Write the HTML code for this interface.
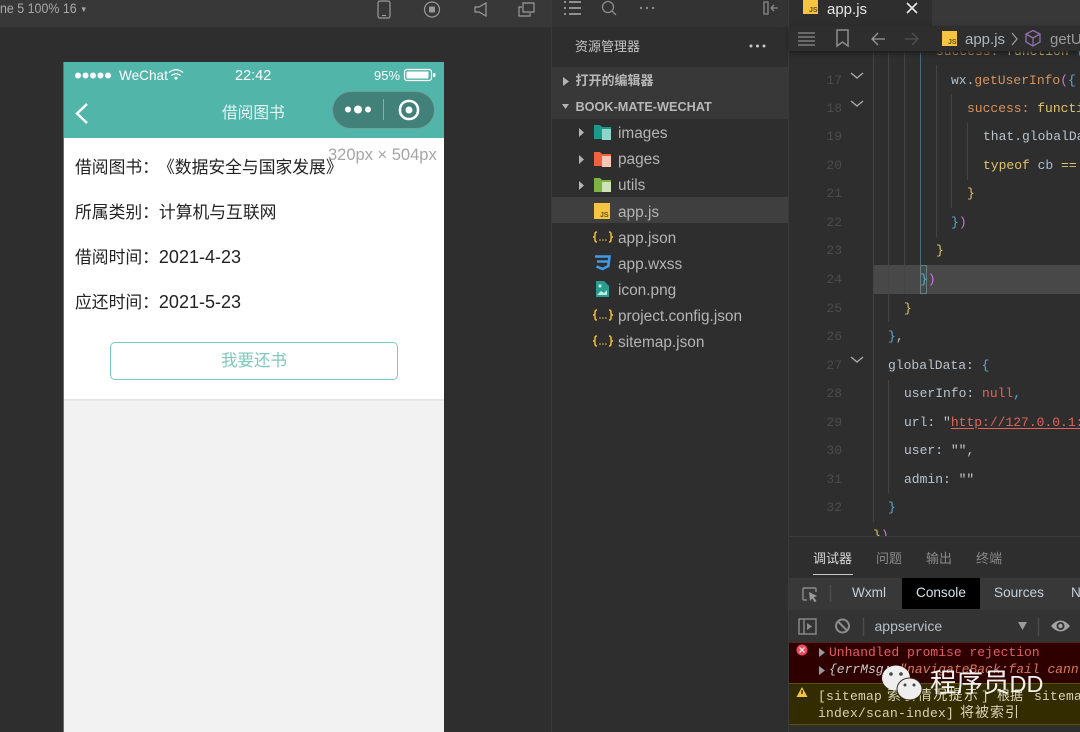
<!DOCTYPE html>
<html><head><meta charset="utf-8">
<style>
*{box-sizing:border-box}
html,body{margin:0;padding:0;width:1080px;height:732px;overflow:hidden;background:#2e2e2e}
body{position:relative;font-family:"Liberation Sans","Noto Sans CJK SC",sans-serif}
.a{position:absolute;white-space:nowrap}
.r{position:absolute}
.code{position:absolute;font:13px/20px "Liberation Mono","Noto Sans CJK SC",monospace;white-space:pre;color:#a9b7c6}
.ln{position:absolute;left:790px;width:52px;text-align:right;font:13px/20px "Liberation Mono",monospace;color:#4c4c4c}
.g{position:absolute;width:1px;background:#444}
.tree{position:absolute;left:618px;font-size:15.4px;line-height:20px;color:#b4b4b4;white-space:nowrap}
.li{position:absolute;left:75px;font-size:16.8px;line-height:24px;color:#222;white-space:nowrap;font-family:"Liberation Sans","Noto Sans CJK SC",sans-serif}
.li b{font-weight:normal;font-size:18px}
.o{color:#d9935c}.y{color:#e0c46c}.w{color:#a9c0d0}.b{color:#5aa9d6}.t{color:#b9c4cc}.rd{color:#e0645a}.s{color:#c8c8c8}
svg{position:absolute;overflow:visible}
.js{font:bold 7px "Liberation Sans",sans-serif;fill:#6a5010}
.tab{font-size:13.6px;line-height:18px;color:#c4d0da}
</style></head><body>

<!-- top toolbar left -->
<div class="r" style="left:0;top:0;width:551px;height:27px;background:#383838"></div>
<div class="a" style="left:0;top:0;line-height:18px;font-size:13.500px;color:#a8a8a8;height:18px;transform:scaleX(.92);transform-origin:0 0">ne 5 100% 16 <span style="font-size:8px;vertical-align:1px">▼</span></div>
<svg style="left:0;top:0" width="551" height="27" fill="none" stroke="#9a9a9a" stroke-width="1.2">
<rect x="378" y="1" width="12" height="17" rx="2"/><line x1="382" y1="15.5" x2="386" y2="15.5"/>
<circle cx="432" cy="9.5" r="7.5"/><rect x="429" y="6.5" width="6" height="6" fill="#9a9a9a" stroke="none" rx="1"/>
<path d="M485 3v13l-7-4h-4V7h4z" transform="translate(1 0)"/>
<path d="M522 7h-3v9h11v-3M523 3h11v9h-11z"/>
</svg>

<!-- phone -->
<div class="r" style="left:63px;top:62px;width:1px;height:670px;background:#6a6a6a"></div>
<div class="r" style="left:64px;top:62px;width:380px;height:76px;background:#52b5aa"></div>
<div class="r" style="left:64px;top:138px;width:380px;height:261px;background:#fff"></div>
<div class="r" style="left:64px;top:399px;width:380px;height:333px;background:#f2f2f2;border-top:2px solid #e6e6e6"></div>

<svg style="left:64px;top:62px" width="380" height="76">
<g fill="#fff"><circle cx="14" cy="13.500" r="3"/><circle cx="21.500" cy="13.500" r="3"/><circle cx="29" cy="13.500" r="3"/><circle cx="36.500" cy="13.500" r="3"/><circle cx="44" cy="13.500" r="3"/></g>
<g fill="none" stroke="#fff" stroke-width="1.300"><path d="M105 10.500q7-5.500 14 0M107.500 13.500q4.500-3.500 9 0"/></g><path d="M110 16l2-1.800 2 1.800-2 2z" fill="#fff"/>
<path d="M23 42l-10 9.500 10 9.500" fill="none" stroke="#fff" stroke-width="2.400"/>
<rect x="340.500" y="7.500" width="27" height="11" rx="2.500" fill="none" stroke="#fff" stroke-width="1.200"/>
<rect x="342.500" y="9.500" width="22" height="7" rx="1" fill="#fff"/>
<path d="M369 11h1.500q1 0 1 1v2q0 1-1 1H369z" fill="#fff"/>
<rect x="268.500" y="29.500" width="102" height="37" rx="18.500" fill="#41817a" stroke="#6aa49e"/>
<g fill="#fff"><circle cx="284" cy="47.500" r="3"/><circle cx="294" cy="47.500" r="4"/><circle cx="304" cy="47.500" r="3"/></g>
<line x1="319.500" y1="37" x2="319.500" y2="58" stroke="#7fb0aa"/>
<rect x="336" y="39" width="18" height="18" rx="8.500" fill="none" stroke="#fff" stroke-width="2.600"/><circle cx="345" cy="48" r="3.500" fill="#fff"/>
</svg>
<div class="a" style="left:119px;top:67px;font-size:13.600px;line-height:18px;color:#fff">WeChat</div>
<div class="a" style="left:235px;top:67px;font-size:14.500px;line-height:18px;color:#fff">22:42</div>
<div class="a" style="left:374px;top:67px;font-size:13px;line-height:18px;color:#fff">95%</div>
<div class="a" style="left:222px;top:103px;font-size:15.700px;line-height:22px;color:#e6f5f3">借阅图书</div>

<div class="li" style="top:156px">借阅图书：</div>
<div class="li" style="top:156px;left:158px">《数据安全与国家发展》</div>
<div class="li" style="top:201px">所属类别：计算机与互联网</div>
<div class="li" style="top:245px">借阅时间：<b>2021-4-23</b></div>
<div class="li" style="top:290px">应还时间：<b>2021-5-23</b></div>
<div class="a" style="left:328px;top:145px;font-size:16.500px;line-height:20px;color:#a5a5a5">320px × 504px</div>
<div class="r" style="left:110px;top:342px;width:288px;height:38px;border:1px solid #74cbbf;border-radius:5px;background:#fff;text-align:center;font-size:16.500px;line-height:37px;color:#7fc8bd">我要还书</div>

<!-- explorer -->
<div class="r" style="left:551px;top:0;width:1px;height:732px;background:#3a3a3a"></div>
<div class="r" style="left:552px;top:0;width:237px;height:27px;background:#333"></div>
<div class="r" style="left:552px;top:67px;width:237px;height:52px;background:#383838"></div>
<div class="r" style="left:552px;top:197px;width:237px;height:26px;background:#3f3f3f"></div>
<div class="r" style="left:788px;top:0;width:1px;height:732px;background:#3a3a3a"></div>
<svg style="left:552px;top:0" width="237" height="30" fill="none" stroke="#b0b0b0" stroke-width="1.600">
<path d="M17 2h12M17 8h12M17 14h12M12 2h2M12 8h2M12 14h2"/>
<circle cx="56" cy="7" r="5.500" stroke="#8a8a8a" stroke-width="1.300"/><path d="M60 11l4 4" stroke="#8a8a8a" stroke-width="1.300"/>
<g fill="#8a8a8a" stroke="none"><circle cx="89" cy="8" r="1.200"/><circle cx="95" cy="8" r="1.200"/><circle cx="101" cy="8" r="1.200"/></g>
<path d="M212 2h4v12h-4zM226 8h-7M222 5l-3 3 3 3" stroke="#8a8a8a" stroke-width="1.300"/>
</svg>
<div class="a" style="left:575px;top:37px;font-size:13px;line-height:20px;color:#c4c4c4">资源管理器</div>
<svg style="left:552px;top:40px" width="237" height="12" fill="#c8c8c8"><circle cx="199" cy="6" r="1.500"/><circle cx="205.500" cy="6" r="1.500"/><circle cx="212" cy="6" r="1.500"/></svg>
<div class="a" style="left:575.500px;top:71px;font-size:13px;line-height:20px;color:#b8b8b8;font-weight:bold">打开的编辑器</div>
<div class="a" style="left:575.500px;top:97px;font-size:12.700px;line-height:20px;color:#b8b8b8;font-weight:bold">BOOK-MATE-WECHAT</div>
<svg style="left:552px;top:60px" width="60" height="135" fill="#b4b4b4">
<path d="M11 17l6 4.500-6 4.500z"/><path d="M8 44h7l-3.500 5z" transform="translate(2 0)"/>
<path d="M27 68l5 4.500-5 4.500zM27 95l5 4.500-5 4.500zM27 121l5 4.500-5 4.500z"/>
</svg>
<svg style="left:594px;top:124px" width="20" height="230">
<path d="M0 1h6l2 2h9v12H0z" fill="#1a9a8c"/><rect x="8" y="5" width="9" height="11" fill="#8fd6c8"/>
<path d="M0 28h6l2 2h9v12H0z" fill="#f0623f"/><rect x="8" y="32" width="9" height="11" fill="#f7c6b4"/>
<path d="M0 54h6l2 2h9v12H0z" fill="#7cb342"/><rect x="8" y="58" width="9" height="10" fill="#cfe3b8"/>
<rect x="0" y="79" width="16" height="16" fill="#f5c542"/><text class="js" x="6" y="93">JS</text>
<g fill="none" stroke="#e8b43a" stroke-width="1.600" transform="translate(0 4)"><path d="M3 104q-2 0-2 2v1.500q0 1.500-2 1.500 2 0 2 1.500v1.500q0 2 2 2M15 104q2 0 2 2v1.500q0 1.500 2 1.500-2 0-2 1.500v1.500q0 2-2 2"/><g fill="#e8b43a" stroke="none"><circle cx="6" cy="112" r=".8"/><circle cx="9" cy="112" r=".8"/><circle cx="12" cy="112" r=".8"/></g></g>
<path d="M1 132.500h14.500l-1.200 9.500-5.800 3-6-2.500M3 137.500h11" fill="none" stroke="#3d9be9" stroke-width="2.600"/>
<path d="M2 157h8l5 5v11H2z" fill="#2a9d8f"/><circle cx="6" cy="162" r="1.500" fill="#cfe"/><path d="M3 171l4-4 3 2 3-3v5z" fill="#bfe9e0"/>
<g fill="none" stroke="#e8b43a" stroke-width="1.600" transform="translate(0 82)"><path d="M3 104q-2 0-2 2v1.500q0 1.500-2 1.500 2 0 2 1.500v1.500q0 2 2 2M15 104q2 0 2 2v1.500q0 1.500 2 1.500-2 0-2 1.500v1.500q0 2-2 2"/><g fill="#e8b43a" stroke="none"><circle cx="6" cy="112" r=".8"/><circle cx="9" cy="112" r=".8"/><circle cx="12" cy="112" r=".8"/></g></g>
<g fill="none" stroke="#e8b43a" stroke-width="1.600" transform="translate(0 108)"><path d="M3 104q-2 0-2 2v1.500q0 1.500-2 1.500 2 0 2 1.500v1.500q0 2 2 2M15 104q2 0 2 2v1.500q0 1.500 2 1.500-2 0-2 1.500v1.500q0 2-2 2"/><g fill="#e8b43a" stroke="none"><circle cx="6" cy="112" r=".8"/><circle cx="9" cy="112" r=".8"/><circle cx="12" cy="112" r=".8"/></g></g>
</svg>
<div class="tree" style="top:124px">images</div>
<div class="tree" style="top:150px">pages</div>
<div class="tree" style="top:176px">utils</div>
<div class="tree" style="top:203px">app.js</div>
<div class="tree" style="top:229px">app.json</div>
<div class="tree" style="top:255px">app.wxss</div>
<div class="tree" style="top:281px">icon.png</div>
<div class="tree" style="top:307px">project.config.json</div>
<div class="tree" style="top:333px">sitemap.json</div>

<!-- editor -->
<div class="r" style="left:789px;top:0;width:291px;height:26px;background:#383838"></div>
<div class="r" style="left:789px;top:0;width:143px;height:26px;background:#2e2e2e"></div>
<div class="r" style="left:789px;top:26px;width:291px;height:25px;background:#2e2e2e;box-shadow:0 2px 4px #1c1c1c;z-index:3"></div>
<svg style="left:789px;top:0;z-index:4" width="291" height="52" fill="none">
<rect x="14" y="-1" width="15" height="15" fill="#f5c542"/><text class="js" x="20" y="12">JS</text>
<path d="M118 3l10 10M128 3l-10 10" stroke="#e8e8e8" stroke-width="1.600"/>
<path d="M9 33h17M9 37h17M9 41h17M9 45h17" stroke="#8e8e8e" stroke-width="1.200"/>
<path d="M48 30h11v16l-5.500-4-5.500 4z" stroke="#8e8e8e" stroke-width="1.500"/>
<path d="M96 39H83M89 33l-6 6 6 6" stroke="#9a9a9a" stroke-width="1.300"/>
<path d="M129 39h-13M123 33l6 6-6 6" stroke="#505050" stroke-width="1.300"/>
<rect x="153" y="31" width="15" height="15" fill="#f5c542"/><text class="js" x="159" y="44">JS</text>
<path d="M223 33l5 6-5 6" stroke="#9a9a9a" stroke-width="1.300"/>
<path d="M244 30.500l7 3.500v8l-7 4-7-4v-8zM237 34l7 4 7-4M244 38v8" stroke="#8f6fb0" stroke-width="1.300"/>
</svg>
<div class="a" style="left:827px;top:0;font-size:15px;line-height:19px;color:#e6e6e6;z-index:5">app.js</div>
<div class="a" style="left:965px;top:30px;font-size:15px;line-height:20px;color:#aeb6bc;z-index:5">app.js</div>
<div class="a" style="left:1050px;top:30px;font-size:15px;line-height:20px;color:#9a9a9a;z-index:5">getU</div>

<!-- current line -->
<div class="r" style="left:873px;top:265px;width:207px;height:29px;background:#484848"></div>
<div class="r" style="left:920px;top:265px;width:7px;height:29px;background:#3f4c4a;border:1px solid #6d7d7c"></div>
<!-- guides -->
<div class="g" style="left:873px;top:52px;height:470px"></div>
<div class="g" style="left:888px;top:52px;height:270px"></div>
<div class="g" style="left:904px;top:52px;height:242px"></div>
<div class="g" style="left:920px;top:52px;height:214px;background:#4a6a75"></div>
<div class="g" style="left:936px;top:65px;height:172px"></div>
<div class="g" style="left:951px;top:94px;height:114px"></div>
<div class="g" style="left:967px;top:123px;height:57px"></div>
<div class="g" style="left:888px;top:380px;height:113px"></div>

<div class="ln" style="top:71px">17</div><div class="ln" style="top:99px">18</div><div class="ln" style="top:127px">19</div><div class="ln" style="top:156px">20</div><div class="ln" style="top:184px">21</div><div class="ln" style="top:213px">22</div><div class="ln" style="top:241px">23</div><div class="ln" style="top:270px">24</div><div class="ln" style="top:299px">25</div><div class="ln" style="top:327px">26</div><div class="ln" style="top:356px">27</div><div class="ln" style="top:384px">28</div><div class="ln" style="top:413px">29</div><div class="ln" style="top:441px">30</div><div class="ln" style="top:470px">31</div><div class="ln" style="top:498px">32</div>
<svg style="left:850px;top:70px" width="16" height="300" fill="none" stroke="#aeaeae" stroke-width="1.300"><path d="M1 3l6 5 6-5M1 31l6 5 6-5M1 287l6 5 6-5"/></svg>

<div class="code" style="left:936px;top:42px"><span class="o">success:</span> <span class="y">function</span> <span class="b">(</span></div>
<div class="code" style="left:951px;top:71px"><span class="w">wx.</span><span class="o">getUserInfo</span><span style="color:#c678dd">(</span><span class="b">{</span></div>
<div class="code" style="left:967px;top:99px"><span class="o">success:</span> <span class="y">functi</span></div>
<div class="code t" style="left:983px;top:127px">that.globalDa</div>
<div class="code" style="left:983px;top:156px"><span class="y">typeof</span> <span class="w">cb</span> <span class="y">==</span></div>
<div class="code y" style="left:967px;top:184px">}</div>
<div class="code" style="left:951px;top:213px"><span class="b">}</span><span style="color:#c678dd">)</span></div>
<div class="code y" style="left:936px;top:241px">}</div>
<div class="code" style="left:920px;top:270px"><span class="b">}</span><span style="color:#c678dd">)</span></div>
<div class="code y" style="left:904px;top:299px">}</div>
<div class="code" style="left:888px;top:327px"><span class="b">}</span><span class="t">,</span></div>
<div class="code" style="left:888px;top:356px"><span class="t">globalData:</span> <span class="b">{</span></div>
<div class="code" style="left:904px;top:384px"><span class="t">userInfo:</span> <span class="rd">null</span><span class="b">,</span></div>
<div class="code" style="left:904px;top:413px"><span class="t">url:</span> <span class="t">"</span><span class="rd" style="text-decoration:underline;text-decoration-color:#e0645a;text-underline-offset:2px">http://127.0.0.1:</span></div>
<div class="code" style="left:904px;top:441px"><span class="t">user:</span> <span class="s">""</span><span class="t">,</span></div>
<div class="code" style="left:904px;top:470px"><span class="t">admin:</span> <span class="s">""</span></div>
<div class="code b" style="left:888px;top:498px">}</div>
<div class="code" style="left:873px;top:526px"><span class="y">}</span><span style="color:#c678dd">)</span></div>

<!-- debugger panel -->
<div class="r" style="left:789px;top:536px;width:291px;height:196px;background:#2e2e2e;border-top:1px solid #3c3c3c"></div>
<div class="a" style="left:813px;top:549px;font-size:13px;line-height:19px;color:#d8d8d8">调试器</div>
<div class="r" style="left:813px;top:574px;width:40px;height:1px;background:#c8c8c8"></div>
<div class="a" style="left:876px;top:549px;font-size:13px;line-height:19px;color:#8a8a8a">问题</div>
<div class="a" style="left:926px;top:549px;font-size:13px;line-height:19px;color:#8a8a8a">输出</div>
<div class="a" style="left:976px;top:549px;font-size:13px;line-height:19px;color:#8a8a8a">终端</div>
<div class="r" style="left:789px;top:578px;width:291px;height:32px;background:#383838"></div>
<div class="r" style="left:902px;top:578px;width:78px;height:31px;background:#000"></div>
<div class="a tab" style="left:852px;top:584px">Wxml</div>
<div class="a tab" style="left:916px;top:584px;color:#d6e2ea">Console</div>
<div class="a tab" style="left:994px;top:584px">Sources</div>
<div class="a tab" style="left:1071px;top:584px">N</div>
<div class="r" style="left:789px;top:610px;width:291px;height:32px;background:#333"></div>
<svg style="left:789px;top:578px" width="291" height="64" fill="none" stroke="#8c8c8c" stroke-width="1.400">
<path d="M27 14v-3q0-1-1-1H15q-1 0-1 1v10q0 1 1 1h3"/>
<path d="M20 14l8 4-3.200 1.200 2.700 3.800-1.800 1.200-2.500-3.800-2.200 2.600z" fill="#9a9a9a" stroke="none"/>
<line x1="41.500" y1="7" x2="41.500" y2="24" stroke="#4c4c4c"/>
<rect x="10" y="41" width="17" height="15"/><path d="M15 41v15"/><path d="M18 45l5 3.500-5 3.500z" fill="#8c8c8c" stroke="none"/>
<circle cx="53.500" cy="48" r="6.500" stroke-width="2"/><path d="M49 43.500l9 9" stroke-width="2"/>
<line x1="74.500" y1="40" x2="74.500" y2="58" stroke="#4c4c4c"/>
<path d="M229 44h9l-4.500 8z" fill="#9a9a9a" stroke="none"/>
<line x1="249.500" y1="40" x2="249.500" y2="58" stroke="#4c4c4c"/>
<path d="M262 48q9.500-11 19 0-9.500 11-19 0z" fill="#a4a4a4" stroke="none"/><circle cx="271.500" cy="48" r="4" fill="#333" stroke="none"/><circle cx="271.500" cy="48" r="2.200" fill="#a4a4a4" stroke="none"/>
</svg>
<div class="a" style="left:874.500px;top:617px;font-size:14px;line-height:18px;color:#b6c0c8">appservice</div>

<div class="r" style="left:789px;top:642px;width:291px;height:41px;background:#2f0000;border-top:1px solid #5a2020"></div>
<div class="r" style="left:789px;top:683px;width:291px;height:42px;background:#332c00;border-top:1px solid #5c5200;border-bottom:1px solid #5c5200"></div>
<svg style="left:789px;top:642px" width="40" height="70">
<circle cx="13" cy="8" r="5.500" fill="#ef4a5a"/><path d="M10.500 5.500l5 5M15.500 5.500l-5 5" stroke="#fff" stroke-width="1.200"/>
<path d="M30 6l6 4.500-6 4.500zM30 24l6 4.500-6 4.500z" fill="#9a9a9a"/>
<path d="M13 45l5.500 10h-11z" fill="#f4c542"/><rect x="12.300" y="48" width="1.400" height="4" fill="#332c00"/>
</svg>
<div class="code" style="left:829px;top:643px;color:#e25c64">Unhandled promise rejection</div>
<div class="code" style="left:829px;top:660px;font-style:italic;color:#c8c8c8">{errMsg: <span style="color:#d9795c">"navigateBack:fail cann</span></div>
<div class="code" style="left:818px;top:687px;color:#d8d2b8;letter-spacing:.2px">[sitemap</div>
<div class="code" style="left:887px;top:687px;color:#d8d2b8;font-size:14px;letter-spacing:1.400px">索引情况提示</div>
<div class="code" style="left:981px;top:687px;color:#d8d2b8">]</div>
<div class="code" style="left:997px;top:687px;color:#d8d2b8;font-size:13px">根据</div>
<div class="code" style="left:1034px;top:687px;color:#d8d2b8;letter-spacing:.2px">sitema</div>
<div class="code" style="left:818px;top:704px;color:#d8d2b8;letter-spacing:.2px">index/scan-index]</div>
<div class="code" style="left:960px;top:704px;color:#d8d2b8;font-size:14px;letter-spacing:1px">将被索引</div>

<!-- watermark -->
<svg style="left:881px;top:665px;z-index:6" width="50" height="40">
<ellipse cx="15" cy="13" rx="14" ry="12.500" fill="#eeeeee"/>
<ellipse cx="28.500" cy="24" rx="12.500" ry="11" fill="#eeeeee" stroke="#3a2a1a" stroke-width="1"/>
<circle cx="10" cy="9" r="1.800" fill="#444"/><circle cx="20" cy="9" r="1.800" fill="#444"/>
<circle cx="24" cy="20" r="1.500" fill="#444"/><circle cx="33" cy="20" r="1.500" fill="#444"/>
</svg>
<div class="a" style="left:930px;top:667px;font-size:26.500px;line-height:32px;color:#f2f2f2;z-index:6">程序员<span style="font-size:23.500px">DD</span></div>

</body></html>
